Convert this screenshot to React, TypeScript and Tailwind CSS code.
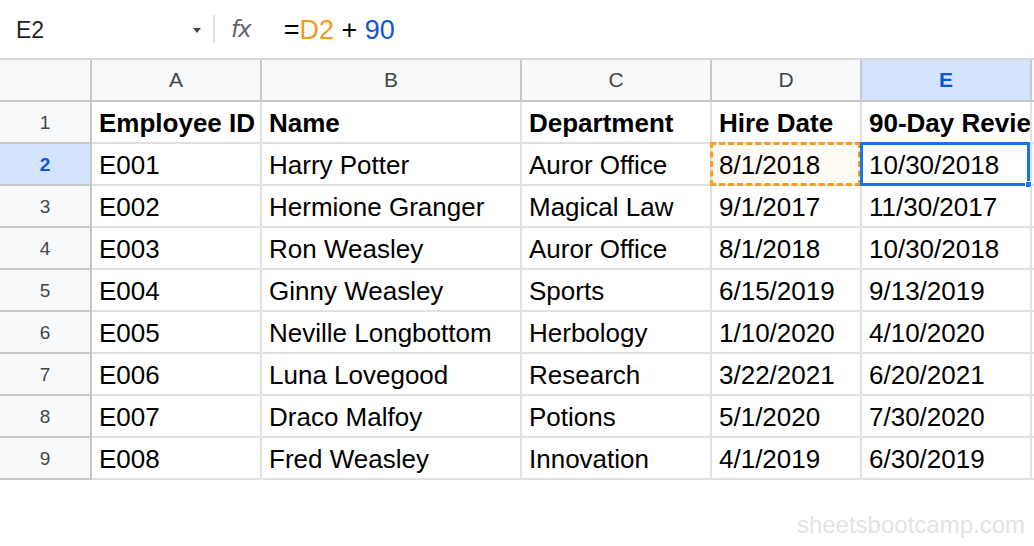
import React from 'react'

const cols = ['A', 'B', 'C', 'D', 'E']

const rows: string[][] = [
  ['Employee ID', 'Name', 'Department', 'Hire Date', '90-Day Review Date'],
  ['E001', 'Harry Potter', 'Auror Office', '8/1/2018', '10/30/2018'],
  ['E002', 'Hermione Granger', 'Magical Law', '9/1/2017', '11/30/2017'],
  ['E003', 'Ron Weasley', 'Auror Office', '8/1/2018', '10/30/2018'],
  ['E004', 'Ginny Weasley', 'Sports', '6/15/2019', '9/13/2019'],
  ['E005', 'Neville Longbottom', 'Herbology', '1/10/2020', '4/10/2020'],
  ['E006', 'Luna Lovegood', 'Research', '3/22/2021', '6/20/2021'],
  ['E007', 'Draco Malfoy', 'Potions', '5/1/2020', '7/30/2020'],
  ['E008', 'Fred Weasley', 'Innovation', '4/1/2019', '6/30/2019'],
]

const grid = 'grid grid-cols-[92px_170px_260px_190px_150px_170px_1fr]'

export default function App() {
  return (
    <div className="w-[1034px] h-[546px] bg-white overflow-hidden relative font-['Liberation_Sans',Arial,sans-serif]">
      {/* Formula bar */}
      <div className="h-[58px] flex items-center">
        <div className="w-[213px] flex items-center pl-[16px] pr-[12px] pt-[2px]">
          <span className="text-[23px] text-[#1f1f1f] flex-1">E2</span>
          <svg width="8" height="6" viewBox="0 0 8 6" className="mt-[1px]">
            <path d="M0 0 L8 0 L4 5 Z" fill="#444746" />
          </svg>
        </div>
        <div className="w-[2px] h-[28px] bg-[#e3e3e3]" />
        <span className="ml-[16px] text-[23px] italic text-[#5f6368] font-['DejaVu_Sans','Liberation_Sans',sans-serif] tracking-[-1px]">
          fx
        </span>
        <div className="ml-[33px] text-[27px] text-black pt-[2px]">
          =<span className="text-[#f7981d]">D2</span> + <span className="text-[#1155cc]">90</span>
        </div>
      </div>

      {/* Sheet */}
      <div className="border-t-2 border-[#dadada]">
        {/* Column headers */}
        <div className={`${grid} h-[42px] border-b-2 border-[#c7c7c7]`}>
          <div className="bg-[#f8f9fa] border-r-2 border-[#c7c7c7]" />
          {cols.map((c) => (
            <div
              key={c}
              className={
                c === 'E'
                  ? 'bg-[#d3e3fd] border-r-2 border-[#c7c7c7] flex items-center justify-center text-[21px] font-bold text-[#0b57d0]'
                  : 'bg-[#f8f9fa] border-r-2 border-[#c7c7c7] flex items-center justify-center text-[21px] text-[#444746]'
              }
            >
              {c}
            </div>
          ))}
          <div className="bg-[#f8f9fa]" />
        </div>

        {/* Data rows */}
        {rows.map((r, i) => {
          const rowNum = i + 1
          const active = rowNum === 2
          return (
            <div key={rowNum} className={`${grid} h-[42px]`}>
              <div
                className={
                  active
                    ? 'bg-[#d3e3fd] border-r-2 border-b-2 border-[#c7c7c7] flex items-center justify-center pt-[2px] text-[19px] leading-[24px] font-bold text-[#0b57d0]'
                    : 'bg-[#f8f9fa] border-r-2 border-b-2 border-[#c7c7c7] flex items-center justify-center pt-[2px] text-[19px] leading-[24px] text-[#444746]'
                }
              >
                {rowNum}
              </div>
              {r.map((v, j) => (
                <div
                  key={j}
                  className={`relative min-w-0 h-[42px] border-r-2 border-b-2 border-[#e1e1e1] flex items-center ${
                    active && j === 3 ? 'bg-[#fffaf3]' : ''
                  }`}
                >
                  <span
                    className={`block w-full pl-[7px] pt-[1px] leading-[32px] whitespace-nowrap overflow-hidden text-[26px] text-black ${
                      rowNum === 1 ? 'font-bold' : ''
                    }`}
                  >
                    {v}
                  </span>
                  {active && j === 3 && (
                    <div className="absolute -top-[2px] -left-[2px] -right-[1px] -bottom-[2px] border-[3px] border-dashed border-[#f59e1f]" />
                  )}
                  {active && j === 4 && (
                    <div className="absolute -top-[2px] -left-[2px] right-0 -bottom-[2px] border-[3px] border-[#1a73e8]">
                      <div className="absolute -right-[5px] -bottom-[5px] w-[7px] h-[7px] bg-[#1a73e8] border border-white" />
                    </div>
                  )}
                </div>
              ))}
              <div className="border-b-2 border-[#e1e1e1]" />
            </div>
          )
        })}
      </div>

      <div className="absolute right-[9px] bottom-[3px] text-[24px] text-[#e3e3e3]">
        sheetsbootcamp.com
      </div>
    </div>
  )
}
